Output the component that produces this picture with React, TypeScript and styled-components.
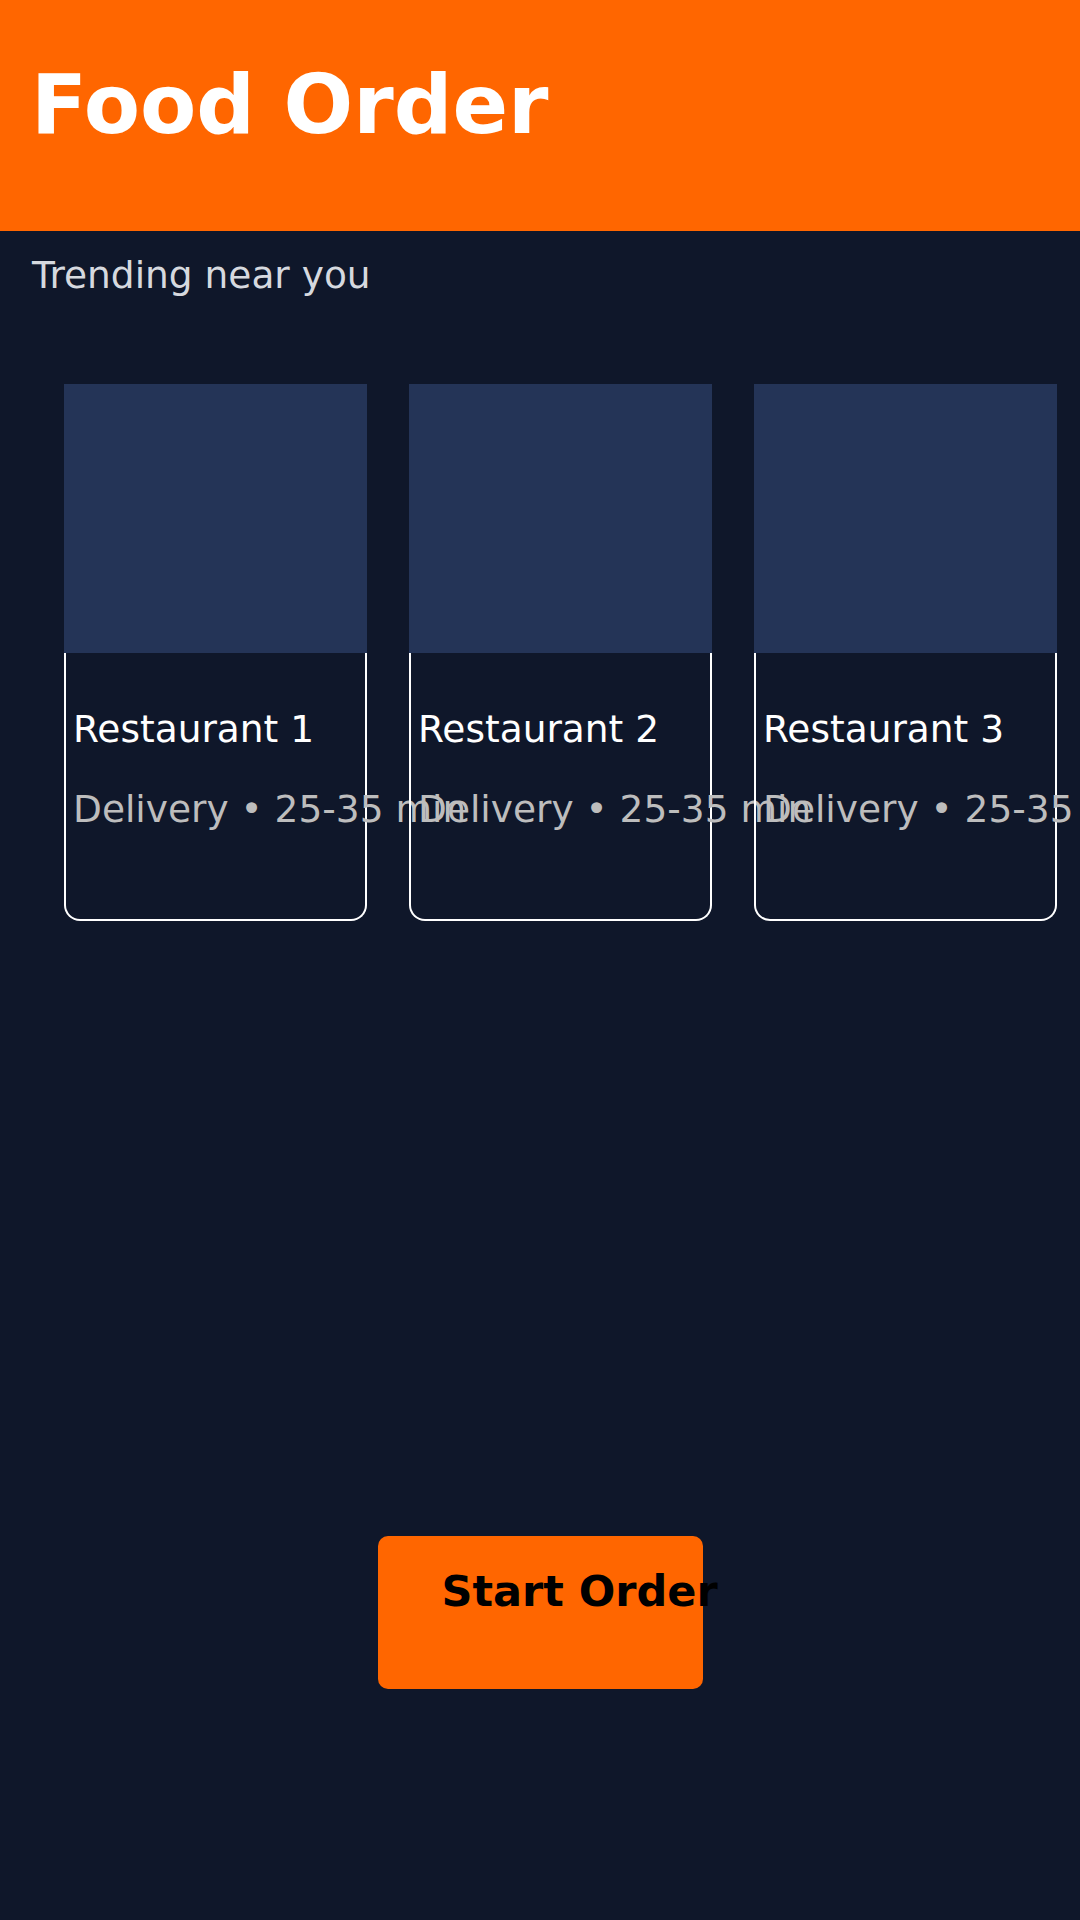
import React from 'react';
import styled, { createGlobalStyle } from 'styled-components';

const GlobalStyle = createGlobalStyle`
  html, body {
    margin: 0;
    padding: 0;
    background: #0f172a;
    overflow: hidden;
  }
  * {
    box-sizing: border-box;
  }
`;

const Page = styled('div')`
  width: 1080px;
  min-height: 1920px;
  background: #0f172a;
  font-family: 'DejaVu Sans', 'Liberation Sans', sans-serif;
  color: #ffffff;
`;

const Header = styled('header')`
  height: 231px;
  padding: 57px 31px 0;
  background: #ff6600;
`;

const Title = styled('h1')`
  margin: 0;
  font-size: 82px;
  font-weight: bold;
  line-height: normal;
  color: #ffffff;
`;

const Subtitle = styled('p')`
  margin: 22px 0 0;
  padding-left: 32px;
  font-size: 37.5px;
  line-height: normal;
  color: #d6d9df;
`;

const CardRow = styled('div')`
  display: flex;
  gap: 42px;
  margin-top: 87px;
  padding-left: 64px;
  overflow: hidden;
`;

const Card = styled('div')`
  display: flex;
  flex-direction: column;
  flex-shrink: 0;
  width: 303px;
`;

const Thumb = styled('div')`
  height: 269px;
  background: #243457;
`;

const Body = styled('div')`
  height: 268px;
  padding: 54px 7px 0;
  border: 2px solid #ffffff;
  border-top: none;
  border-radius: 0 0 16px 16px;
`;

const Name = styled('h3')`
  margin: 0;
  font-size: 37.5px;
  font-weight: normal;
  line-height: normal;
  color: #ffffff;
  white-space: nowrap;
`;

const Meta = styled('p')`
  margin: 36px 0 0;
  font-size: 37.5px;
  line-height: normal;
  color: #bdbdbd;
  white-space: nowrap;
`;

const ButtonWrap = styled('div')`
  display: flex;
  justify-content: center;
  margin-top: 615px;
`;

const StartButton = styled('button')`
  width: 325px;
  height: 153px;
  padding: 30px 0 0 64px;
  border: none;
  border-radius: 10px;
  background: #ff6600;
  color: #000000;
  font-family: 'DejaVu Sans', 'Liberation Sans', sans-serif;
  font-size: 43px;
  font-weight: bold;
  line-height: normal;
  text-align: left;
  white-space: nowrap;
  display: flex;
  align-items: flex-start;
  cursor: pointer;
`;

const restaurants = [1, 2, 3, 4];

export default function App() {
  return (
    <Page>
      <GlobalStyle />
      <Header>
        <Title>Food Order</Title>
      </Header>
      <Subtitle>Trending near you</Subtitle>

      <CardRow>
        {restaurants.map((n) => (
          <Card key={n}>
            <Thumb />
            <Body>
              <Name>Restaurant {n}</Name>
              <Meta>Delivery • 25-35 min</Meta>
            </Body>
          </Card>
        ))}
      </CardRow>

      <ButtonWrap>
        <StartButton>Start Order</StartButton>
      </ButtonWrap>
    </Page>
  );
}
